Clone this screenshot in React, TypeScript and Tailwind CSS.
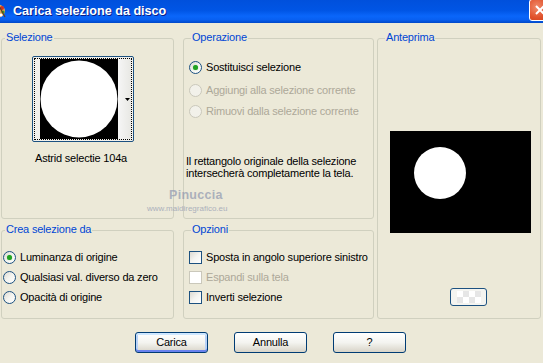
import React from "react";

const Radio = ({ checked, disabled }: { checked?: boolean; disabled?: boolean }) => (
  <span
    className={`w-[13px] h-[13px] rounded-full border shrink-0 flex items-center justify-center ${
      disabled
        ? "border-[#CAC8BB] bg-[#F2F1EA]"
        : "border-[#1C5180] bg-gradient-to-br from-[#DCDAD2] via-[#F4F4F0] to-white"
    }`}
  >
    {checked && <span className="w-[5px] h-[5px] rounded-full bg-[#21A121] shadow-[0_0_1px_#5FD05F]" />}
  </span>
);

const Check = ({ disabled }: { disabled?: boolean }) => (
  <span
    className={`w-[13px] h-[13px] border shrink-0 ${
      disabled
        ? "border-[#CAC8BB] bg-white"
        : "border-[#1C5180] bg-gradient-to-br from-[#DCDAD2] via-[#F4F4F0] to-white"
    }`}
  />
);

const Group = ({
  label,
  labelClass,
  className,
  children,
}: {
  label: string;
  labelClass: string;
  className: string;
  children?: React.ReactNode;
}) => (
  <div className={`relative border border-[#D0D0BF] rounded-[3px] flex flex-col ${className}`}>
    <span className={`absolute top-[-8px] px-[1px] bg-[#ECE9D8] text-[#0046D5] leading-[13px] ${labelClass}`}>
      {label}
    </span>
    {children}
  </div>
);

const Btn = ({ children, def }: { children: React.ReactNode; def?: boolean }) => (
  <div
    className={`w-[73px] h-[21px] rounded-[3px] border border-[#003C74] flex items-center justify-center bg-gradient-to-b from-white via-[#F4F4F0] to-[#D8D4C8] ${
      def
        ? "shadow-[inset_0_2px_0_#CEE7FF,inset_0_-2px_0_#6982EE,inset_2px_0_0_#B8D2F7,inset_-2px_0_0_#B8D2F7]"
        : ""
    }`}
  >
    {children}
  </div>
);

export default function App() {
  return (
    <div className="relative w-[543px] h-[363px] overflow-hidden bg-[#ECE9D8] text-[11px] text-black font-['Liberation_Sans',Arial,sans-serif] tracking-[-0.2px] flex flex-col">
      {/* title bar */}
      <div className="h-[23px] shrink-0 flex items-start bg-[linear-gradient(180deg,#0050DC_0%,#0055E5_45%,#0A66FA_70%,#0860F2_85%,#0048C8_100%)]">
        <svg width="16" height="16" viewBox="0 0 16 16" className="-ml-[10px] mt-[3px] shrink-0">
          <ellipse cx="8" cy="8" rx="7" ry="6.5" fill="#E8A050" />
          <circle cx="12" cy="5" r="2" fill="#D03020" />
          <circle cx="13" cy="9" r="1.6" fill="#30A030" />
          <circle cx="11" cy="12" r="1.6" fill="#FFFFFF" />
          <path d="M9 3 L15 14" stroke="#604020" strokeWidth="1.2" />
        </svg>
        <span className="ml-[7px] mt-[4px] text-white font-bold text-[12.6px] tracking-[0px] leading-[15px] [text-shadow:1px_1px_0_#0A1E8A]">
          Carica selezione da disco
        </span>
        <div className="ml-auto -mr-[8px] -mt-[1px] w-[22px] h-[22px] rounded-[3px] border border-white bg-[radial-gradient(circle_at_35%_35%,#F08A6A,#E0502A_60%,#C8401C)] flex items-center justify-center shrink-0">
          <svg width="10" height="10" viewBox="0 0 10 10">
            <path d="M1 1 L9 9 M9 1 L1 9" stroke="white" strokeWidth="2" />
          </svg>
        </div>
      </div>

      {/* body */}
      <div className="flex pl-[1px] pt-[15px]">
        <div className="flex flex-col gap-[11px]">
          <div className="flex gap-[9px] h-[181px]">
            <Group label="Selezione" labelClass="left-[3px]" className="w-[173px]">
              <div className="ml-[30px] mt-[17px] w-[102px] h-[86px] border border-[#1C5180] rounded-[2px] p-[1px] bg-[#F2F1EC]">
                <div className="h-full border border-dotted border-black flex pl-[5px]">
                  <svg width="78" height="80" viewBox="0 0 78 80" className="shrink-0">
                    <rect width="78" height="80" fill="#000" />
                    <circle cx="39" cy="40" r="38.5" fill="#fff" />
                  </svg>
                  <div className="w-[13px] h-[80px] bg-gradient-to-r from-[#F6F6F6] to-[#E8E8E4] flex items-center justify-end pr-[1px]">
                    <svg width="5" height="3" viewBox="0 0 5 3">
                      <path d="M0 0 H5 L2.5 3 Z" fill="#000" />
                    </svg>
                  </div>
                </div>
              </div>
              <div className="ml-[33px] mt-[10px] leading-[13px]">Astrid selectie 104a</div>
            </Group>

            <Group label="Operazione" labelClass="left-[7px]" className="w-[191px]">
              <div className="mt-[22px] pl-[5px] flex flex-col">
                <div className="flex items-center gap-[4px] h-[13px]">
                  <Radio checked />
                  <span>Sostituisci selezione</span>
                </div>
                <div className="flex items-center gap-[4px] h-[13px] mt-[10px] text-[#ACA899]">
                  <Radio disabled />
                  <span>Aggiungi alla selezione corrente</span>
                </div>
                <div className="flex items-center gap-[4px] h-[13px] mt-[8px] text-[#ACA899]">
                  <Radio disabled />
                  <span>Rimuovi dalla selezione corrente</span>
                </div>
              </div>
              <div className="mt-[37px] pl-[2px] leading-[12px]">
                Il rettangolo originale della selezione
                <br />
                intersecherà completamente la tela.
              </div>
            </Group>
          </div>

          <div className="flex gap-[9px] h-[89px]">
            <Group label="Crea selezione da" labelClass="left-[3px]" className="w-[173px]">
              <div className="mt-[20px] pl-[1px] flex flex-col gap-[7px]">
                <div className="flex items-center gap-[4px] h-[13px]">
                  <Radio checked />
                  <span>Luminanza di origine</span>
                </div>
                <div className="flex items-center gap-[4px] h-[13px]">
                  <Radio />
                  <span>Qualsiasi val. diverso da zero</span>
                </div>
                <div className="flex items-center gap-[4px] h-[13px]">
                  <Radio />
                  <span>Opacità di origine</span>
                </div>
              </div>
            </Group>

            <Group label="Opzioni" labelClass="left-[7px]" className="w-[191px]">
              <div className="mt-[20px] pl-[5px] flex flex-col gap-[7px]">
                <div className="flex items-center gap-[4px] h-[13px]">
                  <Check />
                  <span>Sposta in angolo superiore sinistro</span>
                </div>
                <div className="flex items-center gap-[4px] h-[13px] text-[#ACA899]">
                  <Check disabled />
                  <span>Espandi sulla tela</span>
                </div>
                <div className="flex items-center gap-[4px] h-[13px]">
                  <Check />
                  <span>Inverti selezione</span>
                </div>
              </div>
            </Group>
          </div>
        </div>

        <Group label="Anteprima" labelClass="left-[7px]" className="ml-[3px] w-[164px] h-[281px]">
          <svg width="141" height="102" viewBox="0 0 141 102" className="ml-[12px] mt-[92px] shrink-0">
            <rect width="141" height="102" fill="#000" />
            <circle cx="50" cy="42" r="26" fill="#fff" />
          </svg>
          <div className="ml-[72px] mt-[55px] w-[37px] h-[18px] rounded-[3px] border border-[#1C5180] bg-[#F4F4F0] flex items-center justify-center">
            <div className="w-[24px] h-[12px] bg-[repeating-conic-gradient(#E6E6E6_0%_25%,#FFFFFF_0%_50%)] bg-[length:12px_12px]" />
          </div>
        </Group>
      </div>

      {/* buttons */}
      <div className="flex gap-[26px] pl-[135px] mt-[13px]">
        <Btn def>Carica</Btn>
        <Btn>Annulla</Btn>
        <Btn>?</Btn>
      </div>

      {/* watermark */}
      <div className="absolute left-[169px] top-[189px] text-[12.5px] font-bold leading-[13px] text-[#9098B0] opacity-70 tracking-[0.3px]">
        Pinuccia
      </div>
      <div className="absolute left-[147px] top-[204px] text-[8px] leading-[9px] text-[#9098B0] opacity-70 tracking-[0px]">
        www.maidiregrafico.eu
      </div>
    </div>
  );
}
